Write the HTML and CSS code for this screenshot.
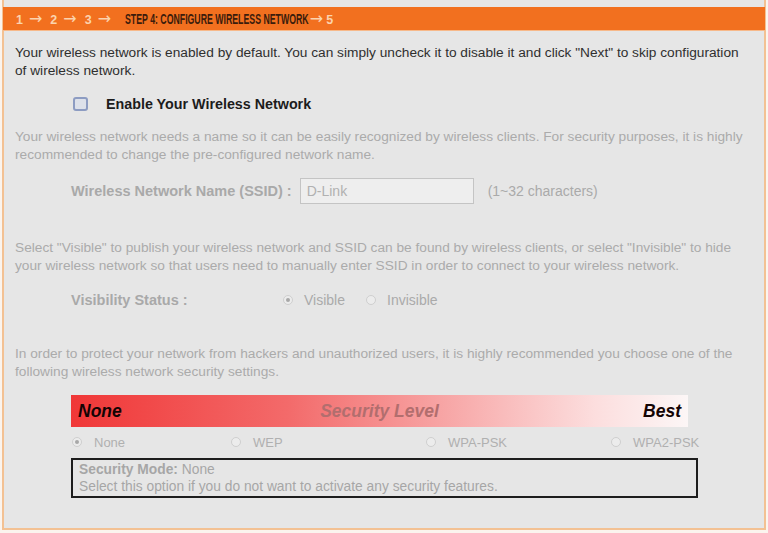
FILE: index.html
```html
<!DOCTYPE html>
<html lang="en">
<head>
    <meta charset="UTF-8">
    <title>Setup Wizard - Step 4</title>
    <link rel="stylesheet" href="styles.css">
</head>
<body>
    <div class="wizard">
        <div class="wizard-head">
            <span class="step-done">1<span class="arrow">&rarr;</span>2<span class="arrow">&rarr;</span>3<span class="arrow">&rarr;</span></span><span class="step-now">STEP 4: CONFIGURE WIRELESS NETWORK</span><span class="step-done"><span class="arrow last">&rarr;</span>5</span>
        </div>

        <div class="wizard-body">
            <p class="note intro">Your wireless network is enabled by default. You can simply uncheck it to disable it and click "Next" to skip configuration of wireless network.</p>

            <div class="enable-row">
                <span class="checkbox"></span>
                <span class="enable-label">Enable Your Wireless Network</span>
            </div>

            <p class="note muted">Your wireless network needs a name so it can be easily recognized by wireless clients. For security purposes, it is highly recommended to change the pre-configured network name.</p>

            <div class="field-row ssid-row">
                <span class="field-label">Wireless Network Name (SSID) :</span>
                <span class="text-input">D-Link</span>
                <span class="hint">(1~32 characters)</span>
            </div>

            <p class="note muted">Select "Visible" to publish your wireless network and SSID can be found by wireless clients, or select "Invisible" to hide your wireless network so that users need to manually enter SSID in order to connect to your wireless network.</p>

            <div class="field-row vis-row">
                <span class="field-label vis-label">Visibility Status :</span>
                <span class="radio checked"></span><span class="radio-text">Visible</span>
                <span class="radio"></span><span class="radio-text">Invisible</span>
            </div>

            <p class="note muted">In order to protect your network from hackers and unauthorized users, it is highly recommended you choose one of the following wireless network security settings.</p>

            <div class="security">
                <div class="level-bar">
                    <span class="level-none">None</span>
                    <span class="level-title">Security Level</span>
                    <span class="level-best">Best</span>
                </div>
                <div class="level-options">
                    <label class="opt opt-none"><span class="radio checked"></span>None</label>
                    <label class="opt opt-wep"><span class="radio"></span>WEP</label>
                    <label class="opt opt-wpa"><span class="radio"></span>WPA-PSK</label>
                    <label class="opt opt-wpa2"><span class="radio"></span>WPA2-PSK</label>
                </div>
                <div class="mode-box">
                    <div><b>Security Mode:</b> None</div>
                    <div>Select this option if you do not want to activate any security features.</div>
                </div>
            </div>
        </div>
    </div>
</body>
</html>
```

FILE: styles.css
```css
body {
    margin: 0;
    background-color: #fbf4ee;
    font-family: "Liberation Sans", Arial, sans-serif;
}

.wizard {
    margin: 0 2px;
    height: 530px;
    border: 2px solid #f3c193;
    border-top: none;
    background-color: #e6e6e6;
    box-sizing: border-box;
    padding-top: 7px;
}

.wizard-head {
    height: 24px;
    margin: 0 -1px;
    padding-left: 13px;
    background-color: #f2701f;
    border-bottom: 1px solid #f7b98a;
    box-sizing: border-box;
    font-size: 12.5px;
    font-weight: bold;
    line-height: 23px;
    white-space: nowrap;
}

.step-done {
    color: #fbd3ae;
}

/* the original header font is a narrow one */
.step-now {
    display: inline-block;
    color: #3b1c0c;
    font-size: 14px;
    margin-left: 14px;
    margin-right: -109px;
    transform: scaleX(0.625);
    transform-origin: left center;
}

.arrow {
    font-family: "DejaVu Sans", sans-serif;
    font-weight: normal;
    font-size: 16px;
    margin: 0 8px 0 6px;
}

.arrow:nth-child(3) {
    margin-right: 0;
}

.arrow.last {
    margin: 0 3px 0 0;
}

.wizard-body {
    padding: 0 13px 0 11px;
}

.note {
    margin: 0;
    font-size: 13.7px;
    line-height: 18px;
    color: #2f2f2f;
}

.note.intro {
    padding-top: 13px;
}

.note.muted {
    color: #ababab;
}

.enable-row {
    display: flex;
    align-items: center;
    height: 30px;
    margin: 9px 0;
    padding-left: 58px;
}

.checkbox {
    width: 11px;
    height: 10px;
    border: 2px solid #8d9cc2;
    border-radius: 3px;
    background-color: #dde1ea;
}

.enable-label {
    margin-left: 18px;
    font-size: 14.3px;
    font-weight: bold;
    color: #1c1c1c;
}

.field-row {
    display: flex;
    align-items: center;
    padding-left: 56px;
    font-size: 14px;
    color: #aaaaaa;
}

.ssid-row {
    height: 28px;
    margin: 13px 0 34px 0;
}

.field-label {
    font-size: 14.5px;
    font-weight: bold;
    color: #a9a9a9;
}

.text-input {
    width: 166px;
    height: 24px;
    margin-left: 8px;
    padding-left: 6px;
    border: 1px solid #c4c4c4;
    background-color: #eeeeee;
    line-height: 24px;
    color: #b1b1b1;
}

.hint {
    margin-left: 14px;
}

.vis-row {
    height: 28px;
    margin: 11px 0 31px 0;
}

.vis-label {
    width: 212px;
}

.radio {
    display: inline-block;
    flex-shrink: 0;
    box-sizing: border-box;
    width: 10px;
    height: 10px;
    border: 1px solid #cfcfcf;
    border-radius: 50%;
    background-color: #ececec;
    position: relative;
}

.radio.checked::after {
    content: "";
    position: absolute;
    left: 2px;
    top: 2px;
    width: 4px;
    height: 4px;
    border-radius: 50%;
    background-color: #a8a8a8;
}

.radio-text {
    margin: 0 21px 0 11px;
}

.security {
    margin: 14px 0 0 56px;
    width: 627px;
}

.level-bar {
    display: flex;
    align-items: center;
    width: 617px;
    height: 32px;
    padding: 0 7px;
    box-sizing: border-box;
    background: linear-gradient(to right, #f03737 0%, #f36a6a 35%, #f8b0b0 65%, #fcdede 85%, #fcf6f6 100%);
    font-size: 17.5px;
    font-weight: bold;
    font-style: italic;
}

.level-none,
.level-best {
    width: 60px;
    color: #140404;
}

.level-best {
    text-align: right;
}

.level-title {
    flex: 1;
    text-align: center;
    color: #b26e6e;
}

.level-options {
    display: flex;
    height: 20px;
    margin-top: 5px;
    align-items: center;
    font-size: 13px;
    color: #b0b0b0;
}

.opt {
    display: flex;
    align-items: center;
    white-space: nowrap;
    flex-shrink: 0;
}

.opt .radio {
    margin-right: 12px;
}

.opt-none {
    margin-left: 1px;
    width: 159px;
}

.opt-wep {
    width: 195px;
}

.opt-wpa {
    width: 185px;
}

.mode-box {
    height: 35px;
    margin-top: 6px;
    border: 2px solid #1d1d1d;
    padding: 1px 6px 0 6px;
    font-size: 13.8px;
    line-height: 17px;
    color: #a6a6a6;
}
```
